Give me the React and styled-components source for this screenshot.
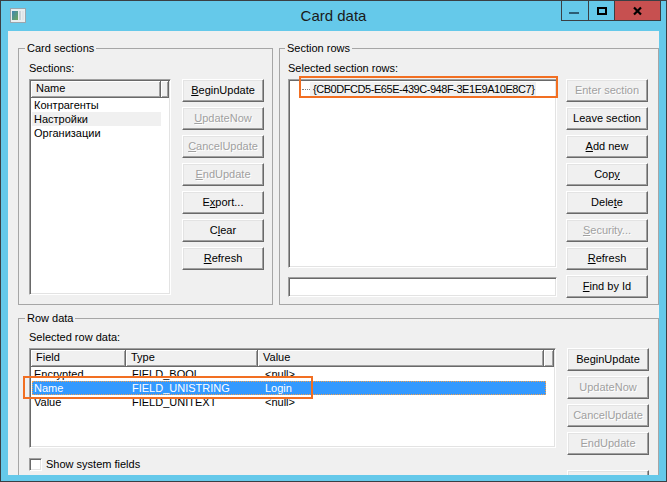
import styled, { createGlobalStyle } from "styled-components";

const GlobalStyle = createGlobalStyle`
  html, body {
    margin: 0;
    padding: 0;
    overflow: hidden;
  }
  body {
    font-family: "Liberation Sans", Arial, sans-serif;
    font-size: 11px;
    color: #000;
  }
`;

const Window = styled.div`
  width: 667px;
  height: 482px;
  box-sizing: border-box;
  border: 1px solid #3a3f44;
  background: #65c9ea;
  display: flex;
  flex-direction: column;
`;

const TitleBar = styled.div`
  height: 30px;
  flex: none;
  display: grid;
  grid-template-columns: 1fr auto 1fr;
  align-items: start;
`;

const AppIcon = styled.svg`
  margin: 7px 0 0 9px;
  display: block;
`;

const Title = styled.div`
  font-size: 15px;
  line-height: 17px;
  margin-top: 6px;
  color: #1a1a1a;
`;

const CaptionButtons = styled.div`
  justify-self: end;
  display: flex;
  margin-right: 5px;
  border: 1px solid #3a3f44;
  border-top: none;
`;

const CaptionButton = styled.div`
  width: ${(p) => p.$w}px;
  height: 19px;
  background: ${(p) => (p.$close ? "#c75050" : "transparent")};
  & + & {
    border-left: 1px solid #3a3f44;
  }
  svg {
    display: block;
  }
`;

const Client = styled.div`
  flex: 1;
  margin: 0 7px 6px;
  background: #f0f0f0;
  overflow: hidden;
  padding: 17px 0 0 10px;
  box-sizing: border-box;
`;

const TopRow = styled.div`
  display: flex;
  gap: 6px;
`;

const GroupBox = styled.div`
  position: relative;
  box-sizing: border-box;
  width: ${(p) => p.$w}px;
  height: ${(p) => p.$h}px;
  margin-top: ${(p) => p.$mt || 0}px;
  border: 1px solid #a6a6a6;
  padding: ${(p) => p.$padTop}px 0 0 ${(p) => p.$padLeft}px;
  display: flex;
  flex-direction: column;
  gap: 4px;
`;

const GroupTitle = styled.span`
  position: absolute;
  top: -7px;
  left: ${(p) => p.$left}px;
  padding: 0 2px;
  background: #f0f0f0;
  line-height: 13px;
`;

const Label = styled.div`
  line-height: 13px;
`;

const Body = styled.div`
  display: flex;
  align-items: flex-start;
  gap: ${(p) => p.$gap}px;
`;

const Column = styled.div`
  display: flex;
  flex-direction: column;
  gap: ${(p) => p.$gap}px;
`;

const ButtonColumn = styled.div`
  display: flex;
  flex-direction: column;
  gap: 5px;
`;

const Button = styled.button`
  width: 82px;
  height: 23px;
  padding: 0 0 1px;
  margin-top: ${(p) => p.$mt || 0}px;
  box-sizing: border-box;
  font-family: "Liberation Sans", Arial, sans-serif;
  font-size: 11px;
  background: #f0f0f0;
  color: ${(p) => (p.disabled ? "#a0a0a0" : "#000")};
  text-shadow: ${(p) => (p.disabled ? "1px 1px 0 #fff" : "none")};
  border: 1px solid;
  border-color: #fff #696969 #696969 #fff;
  box-shadow: inset -1px -1px #a0a0a0, inset 1px 1px #e3e3e3;
  white-space: nowrap;
  u {
    text-decoration-thickness: 1px;
    text-underline-offset: 1px;
  }
`;

const Sunken = styled.div`
  position: relative;
  box-sizing: border-box;
  width: ${(p) => p.$w}px;
  height: ${(p) => p.$h}px;
  background: #fff;
  border: 1px solid;
  border-color: #a0a0a0 #fff #fff #a0a0a0;
  box-shadow: inset 1px 1px #696969, inset -1px -1px #e3e3e3;
  padding: 1px;
  flex: none;
`;

const Header = styled.div`
  display: flex;
  height: 17px;
  background: #f0f0f0;
`;

const HeaderCell = styled.div`
  box-sizing: border-box;
  width: ${(p) => (p.$w ? `${p.$w}px` : "auto")};
  flex: ${(p) => (p.$w ? "none" : "1")};
  padding-left: 5px;
  line-height: 15px;
  border-right: 1px solid #696969;
  border-bottom: 1px solid #696969;
  box-shadow: inset 1px 1px #fff, inset -1px -1px #a0a0a0;
  white-space: nowrap;
  overflow: hidden;
`;

const Row = styled.div`
  display: flex;
  margin-left: 1px;
  height: 14px;
  line-height: 14px;
  width: fit-content;
  background: ${(p) =>
    p.$state === "active" ? "#3399ff" : p.$state === "inactive" ? "#f0f0f0" : "transparent"};
  color: ${(p) => (p.$state === "active" ? "#fff" : "#000")};
  outline: ${(p) => (p.$state === "active" ? "1px dotted #f0a050" : "none")};
  outline-offset: -1px;
`;

const Cell = styled.div`
  box-sizing: border-box;
  width: ${(p) => p.$w}px;
  padding-left: ${(p) => p.$pad}px;
  white-space: nowrap;
  overflow: hidden;
`;

const TreeItem = styled.div`
  display: flex;
  align-items: center;
  height: 16px;
`;

const TreeLine = styled.span`
  width: 8px;
  margin-left: 12px;
  border-top: 1px dotted #808080;
`;

const TreeText = styled.span`
  line-height: 14px;
  padding: 0 2px 0 3px;
  background: #f0f0f0;
  letter-spacing: -0.45px;
  white-space: nowrap;
`;

const Callout = styled.div`
  position: absolute;
  box-sizing: border-box;
  left: ${(p) => p.$x}px;
  top: ${(p) => p.$y}px;
  width: ${(p) => p.$w}px;
  height: ${(p) => p.$h}px;
  border: 2px solid #f26f22;
  pointer-events: none;
`;

const CheckRow = styled.label`
  display: flex;
  align-items: center;
  gap: 4px;
  margin-top: 10px;
  line-height: 13px;
`;

const CheckBox = styled.span`
  width: 13px;
  height: 13px;
  box-sizing: border-box;
  background: #fff;
  border: 1px solid;
  border-color: #a0a0a0 #fff #fff #a0a0a0;
  box-shadow: inset 1px 1px #696969, inset -1px -1px #e3e3e3;
  flex: none;
`;

const sections = ["Контрагенты", "Настройки", "Организации"];

const rowData = [
  ["Encrypted", "FIELD_BOOL", "<null>"],
  ["Name", "FIELD_UNISTRING", "Login"],
  ["Value", "FIELD_UNITEXT", "<null>"],
];

const dataCols = [
  { title: "Field", w: 95, cell: 94, pad: 2 },
  { title: "Type", w: 132, cell: 132, pad: 6 },
  { title: "Value", w: 286, cell: 288, pad: 7 },
];

// mnemonic: text with one underlined letter
const Mn = ({ pre, u, post }) => (
  <>
    {pre}
    <u>{u}</u>
    {post}
  </>
);

const App = () => {
  return (
    <>
      <GlobalStyle />
      <Window>
        <TitleBar>
          <AppIcon width="16" height="15" viewBox="0 0 16 15">
            <defs>
              <linearGradient id="pic" x1="0" y1="0" x2="1" y2="1">
                <stop offset="0" stopColor="#3f86b4" />
                <stop offset="1" stopColor="#6fa75a" />
              </linearGradient>
            </defs>
            <rect x="0.5" y="0.5" width="15" height="14" fill="#e9eef0" stroke="#9aa6ad" />
            <rect x="2" y="3" width="6" height="9" fill="url(#pic)" />
            <rect x="9" y="3" width="2" height="9" fill="#c9d3d8" />
            <rect x="12" y="3" width="2" height="9" fill="#dfe5e8" />
          </AppIcon>
          <Title>Card data</Title>
          <CaptionButtons>
            <CaptionButton $w={26}>
              <svg width="26" height="19">
                <rect x="7" y="11" width="10" height="2" fill="#2c5d74" />
              </svg>
            </CaptionButton>
            <CaptionButton $w={25}>
              <svg width="25" height="19">
                <rect x="9" y="7" width="8" height="6" fill="none" stroke="#000" strokeWidth="2" />
              </svg>
            </CaptionButton>
            <CaptionButton $w={45} $close>
              <svg width="45" height="19">
                <path d="M19 6.5 L26 13.5 M26 6.5 L19 13.5" stroke="#000" strokeWidth="2.2" />
              </svg>
            </CaptionButton>
          </CaptionButtons>
        </TitleBar>

        <Client>
          <TopRow>
            <GroupBox $w={255} $h={257} $padTop={13} $padLeft={10}>
              <GroupTitle $left={6}>Card sections</GroupTitle>
              <Label>Sections:</Label>
              <Body $gap={11}>
                <Sunken $w={142} $h={216}>
                  <Header>
                    <HeaderCell $w={130}>Name</HeaderCell>
                    <HeaderCell />
                  </Header>
                  {sections.map((name, i) => (
                    <Row key={name} $state={i === 1 ? "inactive" : ""}>
                      <Cell $w={129} $pad={2}>
                        {name}
                      </Cell>
                    </Row>
                  ))}
                </Sunken>
                <ButtonColumn>
                  <Button>
                    <Mn u="B" post="eginUpdate" />
                  </Button>
                  <Button disabled>
                    <Mn u="U" post="pdateNow" />
                  </Button>
                  <Button disabled>
                    <Mn u="C" post="ancelUpdate" />
                  </Button>
                  <Button disabled>
                    <Mn u="E" post="ndUpdate" />
                  </Button>
                  <Button>
                    <Mn pre="E" u="x" post="port..." />
                  </Button>
                  <Button>
                    <Mn pre="C" u="l" post="ear" />
                  </Button>
                  <Button>
                    <Mn u="R" post="efresh" />
                  </Button>
                </ButtonColumn>
              </Body>
            </GroupBox>

            <GroupBox $w={380} $h={257} $padTop={13} $padLeft={8}>
              <GroupTitle $left={5}>Section rows</GroupTitle>
              <Label>Selected section rows:</Label>
              <Body $gap={9}>
                <Column $gap={9}>
                  <Sunken $w={269} $h={189}>
                    <TreeItem>
                      <TreeLine />
                      <TreeText>{"{CB0DFCD5-E65E-439C-948F-3E1E9A10E8C7}"}</TreeText>
                    </TreeItem>
                    <Callout $x={10} $y={-4} $w={259} $h={22} />
                  </Sunken>
                  <Sunken $w={269} $h={20} />
                </Column>
                <ButtonColumn>
                  <Button disabled>Enter section</Button>
                  <Button>Leave section</Button>
                  <Button>
                    <Mn u="A" post="dd new" />
                  </Button>
                  <Button>
                    <Mn pre="Cop" u="y" />
                  </Button>
                  <Button>
                    <Mn pre="Dele" u="t" post="e" />
                  </Button>
                  <Button disabled>
                    <Mn u="S" post="ecurity..." />
                  </Button>
                  <Button>
                    <Mn u="R" post="efresh" />
                  </Button>
                  <Button>
                    <Mn u="F" post="ind by Id" />
                  </Button>
                </ButtonColumn>
              </Body>
            </GroupBox>
          </TopRow>

          <GroupBox $w={641} $h={200} $mt={13} $padTop={12} $padLeft={10}>
            <GroupTitle $left={6}>Row data</GroupTitle>
            <Label>Selected row data:</Label>
            <Body $gap={11}>
              <Column $gap={0}>
                <Sunken $w={527} $h={100}>
                  <Header>
                    {dataCols.map((c) => (
                      <HeaderCell key={c.title} $w={c.w}>
                        {c.title}
                      </HeaderCell>
                    ))}
                    <HeaderCell />
                  </Header>
                  {rowData.map((r, i) => (
                    <Row key={r[0]} $state={i === 1 ? "active" : ""}>
                      {r.map((v, j) => (
                        <Cell key={j} $w={dataCols[j].cell} $pad={dataCols[j].pad}>
                          {v}
                        </Cell>
                      ))}
                    </Row>
                  ))}
                  <Callout $x={-7} $y={27} $w={290} $h={23} />
                </Sunken>
                <CheckRow>
                  <CheckBox />
                  Show system fields
                </CheckRow>
              </Column>
              <ButtonColumn>
                <Button>BeginUpdate</Button>
                <Button disabled>UpdateNow</Button>
                <Button disabled>CancelUpdate</Button>
                <Button disabled>EndUpdate</Button>
                <Button $mt={10} disabled aria-label="Refresh" />
              </ButtonColumn>
            </Body>
          </GroupBox>
        </Client>
      </Window>
    </>
  );
};

export default App;
